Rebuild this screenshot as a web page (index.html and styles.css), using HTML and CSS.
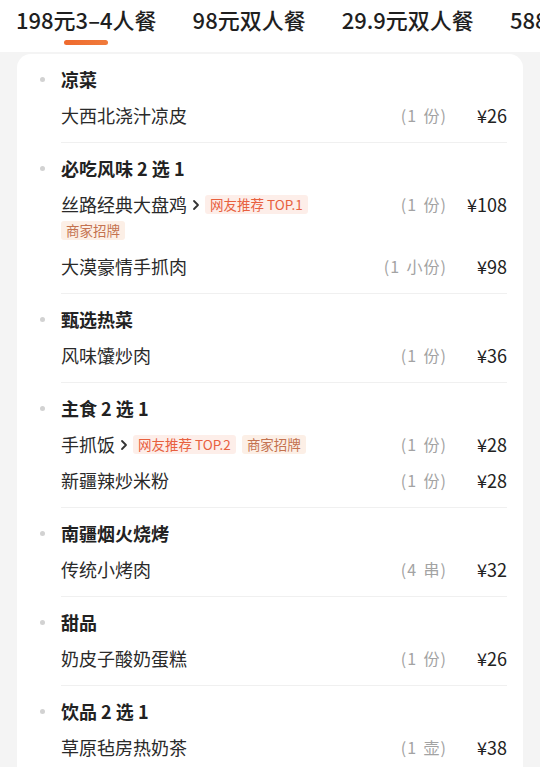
FILE: index.html
```html
<!DOCTYPE html>
<html lang="zh-CN">
<head>
<meta charset="utf-8">
<title>套餐</title>
<link rel="stylesheet" href="styles.css">
</head>
<body>
<div class="tabs">
  <div class="tab active"><span class="tab-text">198元3–4人餐</span><span class="bar"></span></div>
  <div class="tab"><span class="tab-text">98元双人餐</span></div>
  <div class="tab"><span class="tab-text">29.9元双人餐</span></div>
  <div class="tab"><span class="tab-text">588元6–8人餐</span></div>
</div>
<div class="page">
  <div class="card">
    <div class="section">
      <div class="dot-col"><span class="dot"></span></div>
      <div class="body">
        <div class="title">凉菜</div>
        <div class="row"><div class="left"><span class="name">大西北浇汁凉皮</span></div><span class="qty">(1 份)</span><span class="price">¥26</span></div>
      </div>
    </div>
    <div class="section">
      <div class="dot-col"><span class="dot"></span></div>
      <div class="body">
        <div class="title">必吃风味 2 选 1</div>
        <div class="row"><div class="left"><span class="name">丝路经典大盘鸡</span><svg class="chev" width="8" height="12" viewBox="0 0 8 12"><polyline points="2,2 6,6 2,10" fill="none" stroke="#333" stroke-width="1.8" stroke-linecap="round" stroke-linejoin="round"/></svg><span class="tag hot">网友推荐 TOP.1</span><span class="tag sign">商家招牌</span></div><span class="qty">(1 份)</span><span class="price">¥108</span></div>
        <div class="row"><div class="left"><span class="name">大漠豪情手抓肉</span></div><span class="qty">(1 小份)</span><span class="price">¥98</span></div>
      </div>
    </div>
    <div class="section">
      <div class="dot-col"><span class="dot"></span></div>
      <div class="body">
        <div class="title">甄选热菜</div>
        <div class="row"><div class="left"><span class="name">风味馕炒肉</span></div><span class="qty">(1 份)</span><span class="price">¥36</span></div>
      </div>
    </div>
    <div class="section">
      <div class="dot-col"><span class="dot"></span></div>
      <div class="body">
        <div class="title">主食 2 选 1</div>
        <div class="row"><div class="left"><span class="name">手抓饭</span><svg class="chev" width="8" height="12" viewBox="0 0 8 12"><polyline points="2,2 6,6 2,10" fill="none" stroke="#333" stroke-width="1.8" stroke-linecap="round" stroke-linejoin="round"/></svg><span class="tag hot">网友推荐 TOP.2</span><span class="tag sign">商家招牌</span></div><span class="qty">(1 份)</span><span class="price">¥28</span></div>
        <div class="row"><div class="left"><span class="name">新疆辣炒米粉</span></div><span class="qty">(1 份)</span><span class="price">¥28</span></div>
      </div>
    </div>
    <div class="section">
      <div class="dot-col"><span class="dot"></span></div>
      <div class="body">
        <div class="title">南疆烟火烧烤</div>
        <div class="row"><div class="left"><span class="name">传统小烤肉</span></div><span class="qty">(4 串)</span><span class="price">¥32</span></div>
      </div>
    </div>
    <div class="section">
      <div class="dot-col"><span class="dot"></span></div>
      <div class="body">
        <div class="title">甜品</div>
        <div class="row"><div class="left"><span class="name">奶皮子酸奶蛋糕</span></div><span class="qty">(1 份)</span><span class="price">¥26</span></div>
      </div>
    </div>
    <div class="section">
      <div class="dot-col"><span class="dot"></span></div>
      <div class="body">
        <div class="title">饮品 2 选 1</div>
        <div class="row"><div class="left"><span class="name">草原毡房热奶茶</span></div><span class="qty">(1 壶)</span><span class="price">¥38</span></div>
      </div>
    </div>
  </div>
</div>
</body>
</html>
```
FILE: styles.css
```css
* { box-sizing: border-box; }
html, body { margin: 0; padding: 0; }
body {
  width: 540px;
  height: 767px;
  overflow: hidden;
  background: #f4f4f4;
  font-family: "Noto Sans CJK SC", "Noto Sans", sans-serif;
  color: #222;
}
.tabs {
  height: 52px;
  background: #fff;
  display: flex;
  gap: 36px;
  padding: 5px 0 0 16px;
  white-space: nowrap;
  overflow: hidden;
}
.tab {
  display: flex;
  flex-direction: column;
  align-items: center;
  flex-shrink: 0;
}
.tab-text {
  font-size: 22px;
  line-height: 28px;
  font-weight: 500;
  color: #1f1f1f;
}
.bar {
  width: 44px;
  height: 5px;
  margin-top: 7px;
  border-radius: 3px;
  background: linear-gradient(90deg, #ef6a2e, #f07b3c);
}
.page {
  padding: 2px 17px 0 17px;
}
.card {
  background: #fff;
  border-radius: 14px 14px 0 0;
  padding-bottom: 20px;
}
.section {
  display: flex;
}
.dot-col {
  width: 44px;
  flex-shrink: 0;
  padding: 7px 0 0 23px;
}
.dot {
  display: block;
  width: 5px;
  height: 5px;
  margin-top: 16px;
  border-radius: 50%;
  background: #d2d2d2;
}
.body {
  flex: 1;
  margin-right: 16px;
  padding: 8px 0;
  border-bottom: 1px solid #f0f0f0;
}
.section:last-child .body { border-bottom: none; }
.title {
  height: 36px;
  line-height: 35px;
  font-size: 18px;
  font-weight: 700;
  color: #222;
}
.row {
  display: flex;
  align-items: flex-start;
  padding: 4px 0 6px;
}
.left {
  flex: 1;
  display: flex;
  flex-wrap: wrap;
  align-items: center;
  min-width: 0;
}
.name {
  font-size: 18px;
  line-height: 26px;
  color: #2a2a2a;
}
.chev {
  margin: 2px 5px 0 5px;
}
.tag {
  height: 19px;
  line-height: 19px;
  padding: 0 5px;
  font-size: 13.5px;
  border-radius: 3px;
  margin: 3.5px 6px 3.5px 0;
}
.tag.hot { color: #e8603f; background: #fdeee9; }
.tag.sign { color: #c4724f; background: #fcefe6; }
.qty {
  width: 80px;
  margin-left: 10px;
  flex-shrink: 0;
  text-align: right;
  font-size: 16px;
  line-height: 26px;
  letter-spacing: 1px;
  word-spacing: 2px;
  margin-right: -1px;
  color: #a3a3a3;
}
.price {
  width: 61px;
  flex-shrink: 0;
  text-align: right;
  font-size: 18px;
  line-height: 26px;
  color: #222;
}
```
